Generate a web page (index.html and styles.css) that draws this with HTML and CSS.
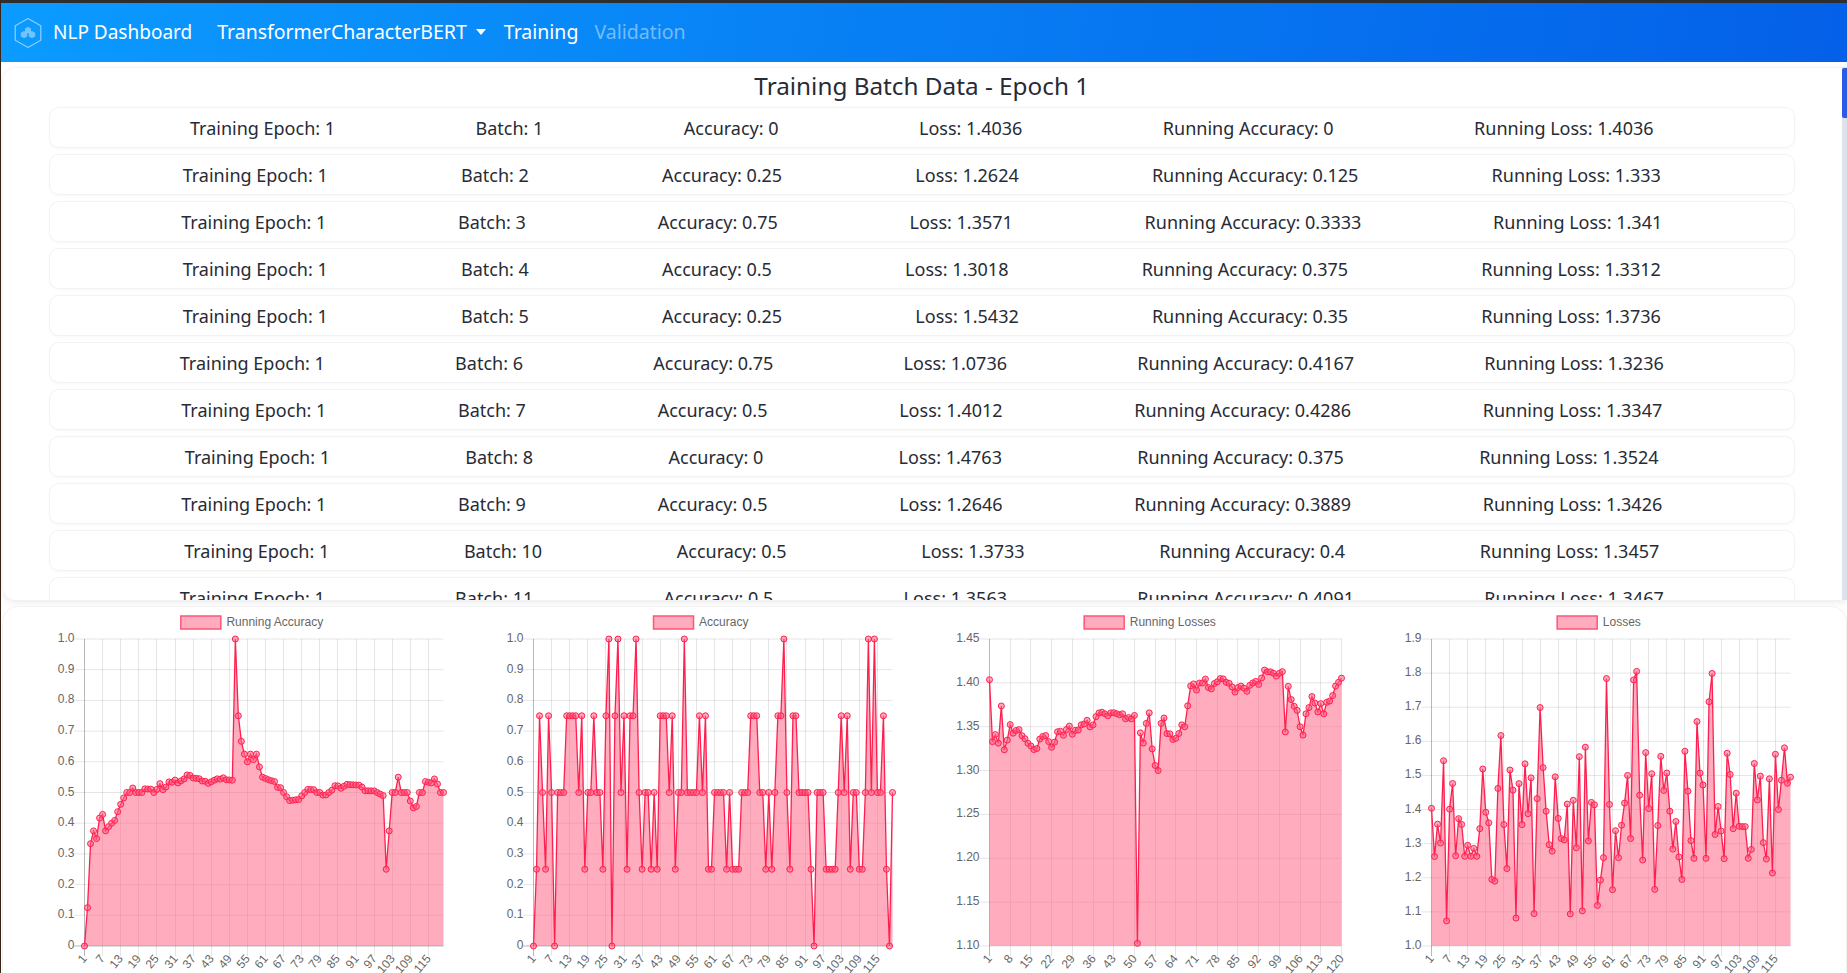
FILE: index.html
```html
<!DOCTYPE html>
<html lang="en">
<head>
  <meta charset="UTF-8" />
  <meta name="viewport" content="width=device-width, initial-scale=1.0"/>
  <title>NLP Dashboard</title>
  <link rel="stylesheet" href="styles.css">
</head>
<body>

  <nav class="navbar">
    <a class="brand" href="#">
      <svg class="brand-logo" viewBox="0 0 30 30" width="30" height="30">
        <polygon class="logo-hex" points="15,0.6 27.8,7.8 27.8,22.2 15,29.4 2.2,22.2 2.2,7.8"/>
        <polygon class="logo-cell" points="15,8.8 18,10.5 18,13.9 15,15.6 12,13.9 12,10.5"/>
        <polygon class="logo-cell" points="11,13 14.2,14.8 14.2,18.5 11,20.3 7.8,18.5 7.8,14.8"/>
        <polygon class="logo-cell" points="19,13 22.2,14.8 22.2,18.5 19,20.3 15.8,18.5 15.8,14.8"/>
      </svg>
      <span class="brand-name">NLP Dashboard</span>
    </a>
    <a class="nav-link nav-dropdown" href="#">TransformerCharacterBERT<span class="caret"></span></a>
    <a class="nav-link" href="#">Training</a>
    <a class="nav-link disabled" href="#">Validation</a>
  </nav>

  <section class="batch-card">
    <div class="batch-scroll">
      <h3 class="batch-title">Training Batch Data - Epoch 1</h3>
      <div id="batchRows"></div>
    </div>
    <div class="scroll-track"><div class="scroll-thumb"></div></div>
  </section>

  <section class="chart-card">
    <div class="chart-box" id="chartRunningAccuracy"></div>
    <div class="chart-box" id="chartAccuracy"></div>
    <div class="chart-box" id="chartRunningLosses"></div>
    <div class="chart-box" id="chartLosses"></div>
  </section>

  <script src="charts.js"></script>
</body>
</html>
```

FILE: styles.css
```css
* {
  box-sizing: border-box;
}

html, body {
  height: 100%;
}

body {
  margin: 0;
  display: flex;
  flex-direction: column;
  overflow: hidden;
  background: #fff;
  border-top: 3px solid #2e2e2e;
  border-left: 1px solid #3a2418;
  font-family: "Noto Sans", sans-serif;
  color: #272b35;
}

.navbar {
  flex: none;
  height: 59px;
  display: flex;
  align-items: center;
  padding-left: 12px;
  background: linear-gradient(100deg, #0b9bff, #0460e8);
}

.navbar a {
  color: #fff;
  text-decoration: none;
  font-size: 19.5px;
}

.navbar .brand {
  display: flex;
  align-items: center;
  gap: 10px;
  margin-right: 25px;
  font-size: 19px;
}

.brand-name,
.nav-link {
  padding-bottom: 2px;
}

.logo-hex {
  fill: none;
  stroke: rgba(255, 255, 255, 0.55);
  stroke-width: 1.2;
}

.logo-cell {
  fill: rgba(255, 255, 255, 0.42);
}

.nav-link {
  margin-right: 16px;
}

.nav-link.disabled {
  color: rgba(255, 255, 255, 0.45);
}

.nav-dropdown {
  display: flex;
  align-items: center;
  margin-right: 18px;
}

.caret {
  margin-left: 9px;
  border-top: 6px solid #fff;
  border-left: 5.5px solid transparent;
  border-right: 5.5px solid transparent;
}

.batch-card {
  flex: none;
  height: 533px;
  margin: 5px 0 0 1px;
  display: flex;
  overflow: hidden;
  background: #fff;
  border-radius: 14px 0 0 14px;
  box-shadow: 0 3px 6px rgba(0, 0, 0, 0.07);
}

.batch-scroll {
  flex: 1;
  min-width: 0;
  padding: 0 47px 0 45.5px;
  overflow: hidden;
  border: 1px solid #f4f4f4;
  border-bottom: 0;
  border-right: 0;
  border-radius: 14px 0 0 14px;
}

.scroll-track {
  flex: none;
  width: 5px;
  background: #dde3ea;
}

.scroll-thumb {
  height: 50px;
  margin-top: 1px;
  background: #2d5be3;
  border-radius: 2px 0 0 2px;
}

.batch-title {
  height: 39px;
  margin: 0;
  line-height: 36px;
  text-align: center;
  font-size: 24.3px;
  font-weight: 400;
}

.batch-row {
  height: 41px;
  margin-bottom: 6px;
  display: flex;
  align-items: center;
  justify-content: space-evenly;
  font-size: 18px;
  background: #fff;
  border: 1px solid #f3f3f3;
  border-radius: 10px;
  box-shadow: 0 1px 3px rgba(0, 0, 0, 0.03);
}

.chart-card {
  flex: 1;
  margin: 6px 0 0 1px;
  padding: 0 23px 0 24px;
  display: grid;
  grid-template-columns: repeat(4, 1fr);
  overflow: hidden;
  background: #fff;
  border: 1px solid #f3f3f3;
  border-bottom: 0;
  border-radius: 16px 16px 0 0;
}

.chart-box {
  display: flex;
  justify-content: center;
  margin-top: -1px;
}

.chart-box svg {
  display: block;
  overflow: visible;
}

.chart-box text {
  font-family: "Liberation Sans", Arial, sans-serif;
  font-size: 12px;
  fill: #666;
}

.grid-line {
  stroke: rgba(0, 0, 0, 0.1);
  stroke-width: 1;
}

.zero-line {
  stroke: rgba(0, 0, 0, 0.28);
  stroke-width: 1;
}

.area {
  fill: rgba(255, 99, 132, 0.53);
}

.trace {
  fill: none;
  stroke: #ff1f4f;
  stroke-width: 1.3;
}

.point {
  fill: rgba(255, 99, 132, 0.55);
  stroke: #ff1f4f;
  stroke-width: 1;
}

.legend-box {
  fill: rgba(255, 99, 132, 0.53);
  stroke: #ff5577;
  stroke-width: 1.5;
}
```

FILE: charts.js
```js
const accuracy = [
  0, .25, .75, .5, .25, .75, .5, 0, .5, .5,
  .5, .75, .75, .75, .75, .5, .75, .25, .5, .5,
  .75, .5, .5, .25, .75, 1, 0, .75, 1, .5,
  .75, .25, .75, .75, 1, .5, .25, .5, .5, .25,
  .5, .25, .75, .75, .75, .5, .75, .25, .5, .5,
  1, .5, .5, .5, .5, .75, .5, .75, .25, .25,
  .5, .5, .5, .5, .25, .5, .25, .25, .25, .5,
  .5, .5, .75, .75, .75, .5, .5, .25, .5, .25,
  .5, .75, .75, 1, .5, .25, .75, .75, .5, .5,
  .5, .5, .25, 0, .5, .5, .5, .25, .25, .25,
  .25, .5, .75, .5, .75, .25, .5, .5, .25, .25,
  .5, 1, .5, 1, .5, .5, .75, .25, 0, .5
];

const losses = [
  1.4036, 1.2624, 1.3571, 1.3018, 1.5432, 1.0736, 1.4012, 1.4763, 1.2646, 1.3733,
  1.3563, 1.263, 1.295, 1.263, 1.286, 1.263, 1.344, 1.519, 1.392, 1.361,
  1.195, 1.19, 1.462, 1.617, 1.356, 1.227, 1.516, 1.457, 1.082, 1.476,
  1.356, 1.534, 1.388, 1.493, 1.095, 1.432, 1.699, 1.523, 1.395, 1.297,
  1.278, 1.496, 1.374, 1.315, 1.311, 1.416, 1.094, 1.427, 1.288, 1.555,
  1.103, 1.583, 1.308, 1.421, 1.414, 1.119, 1.193, 1.259, 1.784, 1.415,
  1.165, 1.338, 1.259, 1.354, 1.419, 1.5, 1.315, 1.78, 1.805, 1.442,
  1.252, 1.567, 1.403, 1.505, 1.166, 1.353, 1.556, 1.456, 1.507, 1.395,
  1.284, 1.365, 1.261, 1.195, 1.571, 1.454, 1.309, 1.257, 1.658, 1.507,
  1.472, 1.257, 1.716, 1.799, 1.327, 1.409, 1.337, 1.256, 1.565, 1.503,
  1.344, 1.448, 1.351, 1.35, 1.35, 1.257, 1.283, 1.535, 1.428, 1.498,
  1.303, 1.255, 1.49, 1.214, 1.562, 1.4, 1.486, 1.581, 1.477, 1.495
];

// Running averages start over every 50 batches
function running(values) {
  let sum = 0;
  return values.map((v, i) => {
    if (i % 50 === 0) sum = 0;
    sum += v;
    return sum / (i % 50 + 1);
  });
}

function round4(v) {
  return Math.round(v * 10000) / 10000;
}

const runningAccuracy = running(accuracy);
const runningLosses = running(losses);

// Only the rows that fit in the card
const visibleRows = 11;
const rowsEl = document.getElementById('batchRows');
accuracy.slice(0, visibleRows).forEach((acc, i) => {
  const row = document.createElement('div');
  row.classList.add('batch-row');
  const cells = [
    'Training Epoch: 1',
    `Batch: ${i + 1}`,
    `Accuracy: ${acc}`,
    `Loss: ${round4(losses[i])}`,
    `Running Accuracy: ${round4(runningAccuracy[i])}`,
    `Running Loss: ${round4(runningLosses[i])}`
  ];
  cells.forEach(text => {
    const cell = document.createElement('span');
    cell.textContent = text;
    row.appendChild(cell);
  });
  rowsEl.appendChild(row);
});

const svgNS = 'http://www.w3.org/2000/svg';

function add(parent, name, attrs, text) {
  const node = document.createElementNS(svgNS, name);
  Object.keys(attrs).forEach(key => node.setAttribute(key, attrs[key]));
  if (text !== undefined) node.textContent = text;
  parent.appendChild(node);
  return node;
}

function drawChart(id, opts) {
  const width = 390;
  const height = 367;
  const top = 33;
  const bottom = 340;
  const left = opts.left;
  const right = 386.5;
  const count = opts.data.length;

  const svg = add(document.getElementById(id), 'svg', {
    width: width,
    height: height,
    viewBox: `0 0 ${width} ${height}`
  });

  const xOf = i => left + (right - left) * i / (count - 1);
  const yOf = v => bottom - (bottom - top) * (v - opts.min) / (opts.max - opts.min);

  // horizontal grid and y labels
  for (let t = 0; t <= opts.ticks; t++) {
    const y = top + (bottom - top) * t / opts.ticks;
    const value = opts.max - (opts.max - opts.min) * t / opts.ticks;
    const isZero = Math.abs(value) < 1e-9;
    add(svg, 'line', {
      class: isZero ? 'zero-line' : 'grid-line',
      x1: left - 10, x2: right, y1: y, y2: y
    });
    add(svg, 'text', { x: left - 10, y: y + 3, 'text-anchor': 'end' },
      isZero ? '0' : value.toFixed(opts.digits));
  }

  // vertical grid and x labels
  for (let i = 0; i < count; i += opts.step) {
    const x = Math.round(xOf(i) - 0.5) + 0.5;
    add(svg, 'line', {
      class: i === 0 ? 'zero-line' : 'grid-line',
      x1: x, x2: x, y1: top, y2: bottom + 10
    });
    add(svg, 'text', {
      'text-anchor': 'end',
      transform: `translate(${x + 3} ${bottom + 13}) rotate(-50)`
    }, i + 1);
  }

  const linePts = opts.data.map((v, i) => `${xOf(i).toFixed(2)},${yOf(v).toFixed(2)}`);
  add(svg, 'polygon', {
    class: 'area',
    points: `${left},${bottom} ${linePts.join(' ')} ${right},${bottom}`
  });
  add(svg, 'polyline', { class: 'trace', points: linePts.join(' ') });
  opts.data.forEach((v, i) => {
    add(svg, 'circle', { class: 'point', cx: xOf(i), cy: yOf(v), r: 3 });
  });

  // legend, centred over the whole chart
  const box = add(svg, 'rect', { class: 'legend-box', y: 10, width: 40, height: 13 });
  const label = add(svg, 'text', { y: 20 }, opts.title);
  const start = (width - 45.6 - label.getComputedTextLength()) / 2;
  box.setAttribute('x', start);
  label.setAttribute('x', start + 45.6);
}

drawChart('chartRunningAccuracy', {
  title: 'Running Accuracy', data: runningAccuracy,
  min: 0, max: 1, ticks: 10, digits: 1, step: 6, left: 27.5
});
drawChart('chartAccuracy', {
  title: 'Accuracy', data: accuracy,
  min: 0, max: 1, ticks: 10, digits: 1, step: 6, left: 27.5
});
drawChart('chartRunningLosses', {
  title: 'Running Losses', data: runningLosses,
  min: 1.1, max: 1.45, ticks: 7, digits: 2, step: 7, left: 34.5
});
drawChart('chartLosses', {
  title: 'Losses', data: losses,
  min: 1, max: 1.9, ticks: 9, digits: 1, step: 6, left: 27.5
});
```
